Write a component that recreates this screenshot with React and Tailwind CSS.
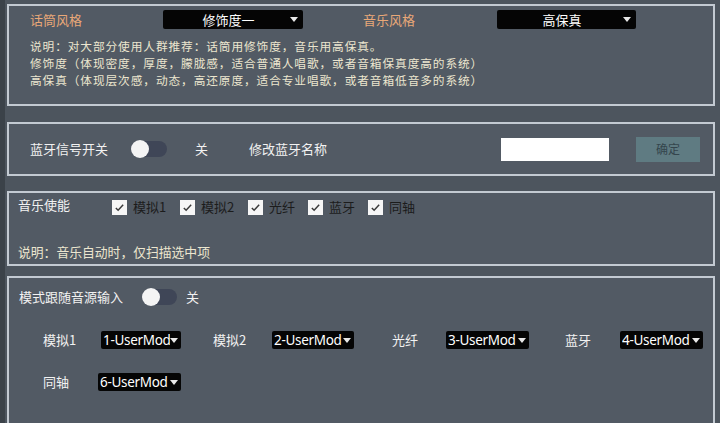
import React from 'react';

const Caret = () => (
  <svg viewBox="0 0 8 5" className="w-[8px] h-[5px] shrink-0">
    <path d="M0 0h8L4 5z" fill="#e8e8e8" />
  </svg>
);

const StyleSelect = ({ value, width }) => (
  <div className={`${width} h-[19px] bg-[#050505] rounded-[2px] flex items-center pr-[5px]`}>
    <span className="flex-1 text-center text-[13px] text-white leading-none pl-[4px]">{value}</span>
    <Caret />
  </div>
);

const ModeSelect = ({ value, width }) => (
  <div className={`${width} h-[18px] bg-[#050505] rounded-[2px] flex items-center pl-[2px] pr-[3px] font-['Noto_Sans','Noto_Sans_CJK_SC',sans-serif]`}>
    <span className="flex-1 overflow-hidden whitespace-nowrap text-[13.5px] leading-[18px] text-white tracking-[-0.3px]">{value}</span>
    <Caret />
  </div>
);

const Toggle = ({ width }) => (
  <div className={`${width} h-[16px] rounded-full bg-[#3f4657] flex items-center`}>
    <div className="w-[18px] h-[18px] rounded-full bg-[#f4f4f4]" />
  </div>
);

const Check = ({ label, width }) => (
  <div className={`${width} flex items-center`}>
    <div className="w-[15px] h-[15px] bg-[#f6f6f6] flex items-center justify-center">
      <svg viewBox="0 0 12 12" className="w-[11px] h-[11px]">
        <path d="M2 6.5l2.5 2.5L10 3" fill="none" stroke="#3a3a3a" strokeWidth="1.6" />
      </svg>
    </div>
    <span className="ml-[6px] text-[13px] text-[#1c1c1c]">{label}</span>
  </div>
);

const Panel = ({ className, children }) => (
  <div className={`w-[708px] border-2 border-[#c3cad2] bg-[#525a64] ${className}`}>{children}</div>
);

export default function App() {
  return (
    <div className="w-[720px] h-[423px] overflow-hidden bg-[#4d555e] flex font-['Noto_Sans_CJK_SC','Noto_Sans',sans-serif]">
      <div className="w-[5px] bg-[#3b4249] shrink-0" />
      <div className="pl-[2px] pt-[4px]">
        <Panel className="h-[102px] pt-[4px] pl-[21px]">
          <div className="flex items-center h-[19px]">
            <span className="w-[133px] text-[13px] text-[#e9a878]">话筒风格</span>
            <StyleSelect value="修饰度一" width="w-[140px]" />
            <span className="ml-[60px] w-[134px] text-[13px] text-[#e9a878]">音乐风格</span>
            <StyleSelect value="高保真" width="w-[139px]" />
          </div>
          <div className="mt-[8px] text-[11.7px] tracking-[0.9px] leading-[17px] text-[#ece6cf]">
            <p>说明：对大部分使用人群推荐：话筒用修饰度，音乐用高保真。</p>
            <p>修饰度（体现密度，厚度，朦胧感，适合普通人唱歌，或者音箱保真度高的系统）</p>
            <p>高保真（体现层次感，动态，高还原度，适合专业唱歌，或者音箱低音多的系统）</p>
          </div>
        </Panel>

        <Panel className="mt-[16px] h-[54px] flex items-center pl-[21px] pr-[13px] text-[13px] text-[#f2f2f2]">
          <span className="w-[78px]">蓝牙信号开关</span>
          <div className="ml-[23px]">
            <Toggle width="w-[36px]" />
          </div>
          <span className="ml-[28px]">关</span>
          <span className="ml-[41px]">修改蓝牙名称</span>
          <div className="ml-auto w-[108px] h-[23px] bg-white" />
          <div className="ml-[27px] w-[64px] h-[25px] bg-[#5f7b82] flex items-center justify-center text-[12px] text-[#34454d]">确定</div>
        </Panel>

        <Panel className="mt-[15px] h-[75px] pt-[4px] pl-[9px]">
          <div className="flex items-center h-[20px]">
            <span className="w-[94px] text-[13px] text-[#f2f2f2] -mt-[4px]">音乐使能</span>
            <Check label="模拟1" width="w-[68px]" />
            <Check label="模拟2" width="w-[68px]" />
            <Check label="光纤" width="w-[60px]" />
            <Check label="蓝牙" width="w-[60px]" />
            <Check label="同轴" width="w-[60px]" />
          </div>
          <p className="mt-[26px] text-[12.8px] leading-[17px] text-[#ece6cf]">说明：音乐自动时，仅扫描选中项</p>
        </Panel>

        <Panel className="mt-[10px] h-[160px] pt-[9px] pl-[10px] text-[13px] text-[#f2f2f2]">
          <div className="flex items-center h-[20px]">
            <span className="w-[104px]">模式跟随音源输入</span>
            <div className="ml-[19px]">
              <Toggle width="w-[35px]" />
            </div>
            <span className="ml-[9px]">关</span>
          </div>
          <div className="mt-[24px] flex items-center h-[18px] pl-[24px]">
            <span className="w-[58px]">模拟1</span>
            <ModeSelect value="1-UserMod" width="w-[80px]" />
            <span className="ml-[32px] w-[59px]">模拟2</span>
            <ModeSelect value="2-UserMod" width="w-[82px]" />
            <span className="ml-[38px] w-[54px]">光纤</span>
            <ModeSelect value="3-UserMod" width="w-[83px]" />
            <span className="ml-[36px] w-[55px]">蓝牙</span>
            <ModeSelect value="4-UserMod" width="w-[83px]" />
          </div>
          <div className="mt-[24px] flex items-center h-[18px] pl-[24px]">
            <span className="w-[55px]">同轴</span>
            <ModeSelect value="6-UserMod" width="w-[83px]" />
          </div>
        </Panel>
      </div>
    </div>
  );
}
